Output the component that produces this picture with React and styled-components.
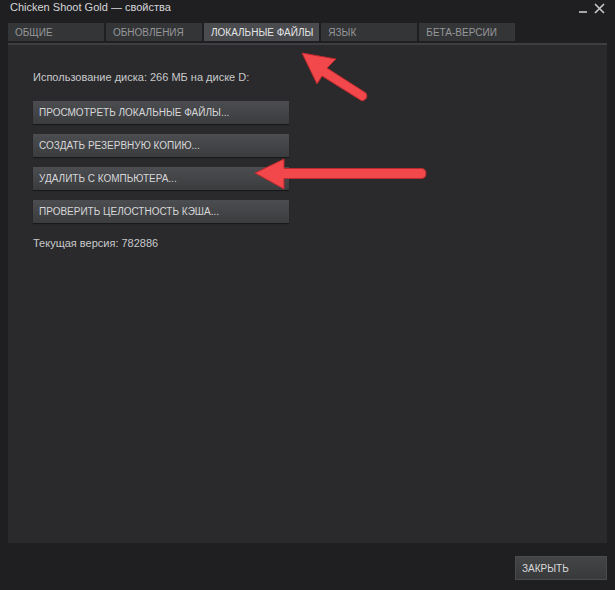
import React from "react";
import styled, { createGlobalStyle } from "styled-components";

const GlobalStyle = createGlobalStyle`
  html, body { margin: 0; padding: 0; background: #1f1f21; }
  body { font-family: "Liberation Sans", Arial, sans-serif; }
`;

const Window = styled.div`
  position: relative;
  width: 615px;
  height: 590px;
  background: #1f1f21;
  display: flex;
  flex-direction: column;
  box-sizing: border-box;
  overflow: hidden;
`;

const TitleBar = styled.div`
  height: 23px;
  display: flex;
  align-items: flex-start;
  justify-content: space-between;
  padding: 1px 10px 0 10px;
  box-sizing: border-box;
`;

const Title = styled.div`
  font-size: 11px;
  line-height: 13px;
  color: #d6d7d9;
`;

const Controls = styled.div`
  display: flex;
  align-items: center;
  gap: 6px;
  margin-top: 2px;
`;

const TabRow = styled.div`
  display: flex;
  gap: 2px;
  padding: 0 8px;
  height: 18px;
`;

const Tab = styled.div`
  min-width: 96px;
  padding: 0 6px 0 7px;
  box-sizing: border-box;
  display: flex;
  align-items: center;
  font-size: 10px;
  text-transform: uppercase;
  color: ${(p) => (p.$active ? "#e4e5e6" : "#96979a")};
  background: ${(p) => (p.$active ? "#4a4b4e" : "#343537")};
`;

const Divider = styled.div`
  margin: 2px 8px 0 8px;
  height: 2px;
  background: #3d3e41;
`;

const Panel = styled.div`
  margin: 0 8px;
  height: 498px;
  background: #2a2a2c;
  padding: 26px 25px 0 25px;
  box-sizing: border-box;
  display: flex;
  flex-direction: column;
`;

const InfoText = styled.div`
  font-size: 11px;
  line-height: 13px;
  color: #c8c9cb;
  margin-bottom: ${(p) => p.$mb || 0}px;
`;

const ButtonList = styled.div`
  display: flex;
  flex-direction: column;
  gap: 10px;
  margin-bottom: 14px;
`;

const ActionButton = styled.div`
  width: 256px;
  height: 23px;
  box-sizing: border-box;
  padding-left: 6px;
  display: flex;
  align-items: center;
  font-size: 10px;
  color: #d6d7d9;
  text-transform: uppercase;
  background: linear-gradient(#4c4d50, #3b3c3e);
  box-shadow: 0 1px 1px rgba(0, 0, 0, 0.4);
`;

const Footer = styled.div`
  flex: 1;
  display: flex;
  justify-content: flex-end;
  align-items: flex-start;
  padding: 13px 8px 0 8px;
`;

const CloseButton = styled.div`
  width: 92px;
  height: 24px;
  box-sizing: border-box;
  padding-left: 6px;
  display: flex;
  align-items: center;
  font-size: 10px;
  color: #d8d9db;
  background: linear-gradient(#434446, #38393b);
  border: 1px solid #4a4b4d;
`;

const Overlay = styled.svg`
  position: absolute;
  left: 0;
  top: 0;
  pointer-events: none;
`;

export default function App() {
  const tabs = ["Общие", "Обновления", "Локальные файлы", "Язык", "Бета-версии"];
  const buttons = [
    "Просмотреть локальные файлы...",
    "Создать резервную копию...",
    "Удалить с компьютера...",
    "Проверить целостность кэша...",
  ];
  return (
    <>
      <GlobalStyle />
      <Window>
        <TitleBar>
          <Title>Chicken Shoot Gold — свойства</Title>
          <Controls>
            <svg width="10" height="10" viewBox="0 0 10 10">
              <line x1="1" y1="8" x2="9" y2="8" stroke="#c8c9cb" strokeWidth="1.6" />
            </svg>
            <svg width="11" height="11" viewBox="0 0 11 11">
              <path d="M1 1 L10 10 M10 1 L1 10" stroke="#c8c9cb" strokeWidth="1.6" />
            </svg>
          </Controls>
        </TitleBar>
        <TabRow>
          {tabs.map((t, i) => (
            <Tab key={t} $active={i === 2}>
              {t}
            </Tab>
          ))}
        </TabRow>
        <Divider />
        <Panel>
          <InfoText $mb={17}>Использование диска: 266 МБ на диске D:</InfoText>
          <ButtonList>
            {buttons.map((b) => (
              <ActionButton key={b}>{b}</ActionButton>
            ))}
          </ButtonList>
          <InfoText>Текущая версия: 782886</InfoText>
        </Panel>
        <Footer>
          <CloseButton>ЗАКРЫТЬ</CloseButton>
        </Footer>
        <Overlay width="615" height="590" viewBox="0 0 615 590">
          <g fill="#f2474b" stroke="#b82a2e" strokeWidth="1" strokeLinejoin="round">
            <path d="M302 53 L336 59 L327 68 L366 93 Q369 99 362 101 L322 76 L317 84 Z" />
            <path d="M255 173 L284 159 L284 168.5 L421 168.5 Q426 168.5 426 173.5 Q426 178.5 421 178.5 L284 178.5 L284 189 Z" />
          </g>
        </Overlay>
      </Window>
    </>
  );
}
